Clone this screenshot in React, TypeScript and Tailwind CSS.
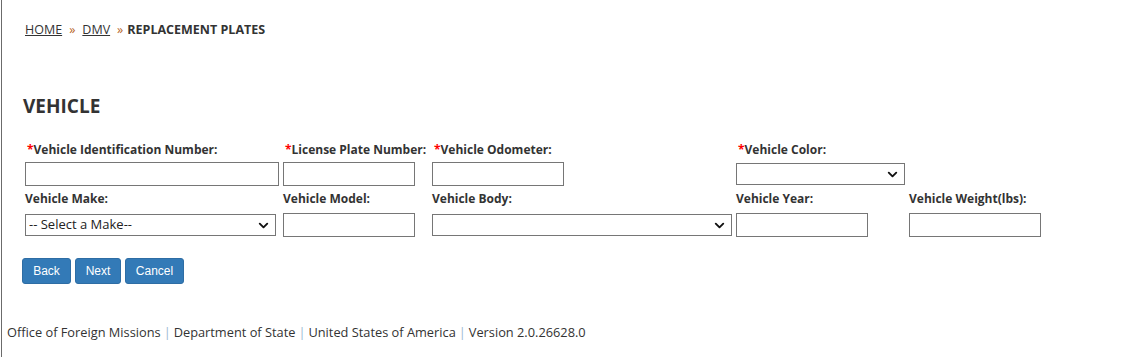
import { ChevronDown } from "lucide-react"

function Req() {
  return <span className="text-[#ff0000]">*</span>
}

function Field({ className = "" }: { className?: string }) {
  return <input type="text" className={`h-[24px] border border-[#767676] bg-white ${className}`} />
}

function Select({ className = "", text = "" }: { className?: string; text?: string }) {
  return (
    <div className={`relative flex h-[22px] items-center border border-[#767676] bg-white ${className}`}>
      <span className="pl-[3px] text-[13px] text-[#222]">{text}</span>
      <ChevronDown className="absolute right-[4px] top-[3px] h-[15px] w-[15px] text-[#111]" strokeWidth={3} />
    </div>
  )
}

function Label({ children, row1 = false }: { children: React.ReactNode; row1?: boolean }) {
  return (
    <div className={`flex items-center text-[12px] font-bold text-[#333] ${row1 ? "h-[20px] pl-[2px]" : "h-[26px]"}`}>
      {children}
    </div>
  )
}

export default function App() {
  return (
    <div
      className="ml-[1px] min-h-[357px] border-l border-[#6b6b6b] bg-white pt-[22px]"
      style={{ fontFamily: '"Open Sans", "DejaVu Sans", sans-serif' }}
    >
      <div className="pl-[23px]">
        <nav className="flex h-[16px] items-center text-[12.5px] text-[#333]">
          <a href="#" className="underline">HOME</a>
          <span className="mx-[7px] text-[#b7651f]">»</span>
          <a href="#" className="underline">DMV</a>
          <span className="ml-[7px] mr-[4px] text-[#b7651f]">»</span>
          <span className="font-bold">REPLACEMENT PLATES</span>
        </nav>

        <h2 className="mt-[58px] ml-[-2px] h-[20px] text-[19px] font-bold leading-[20px] text-[#333]">VEHICLE</h2>

        <div className="mt-[24px] grid grid-cols-[258px_149px_304px_173px_auto]">
          <Label row1><Req />Vehicle Identification Number:</Label>
          <Label row1><Req />License Plate Number:</Label>
          <Label row1><Req />Vehicle Odometer:</Label>
          <Label row1><Req />Vehicle Color:</Label>
          <div />

          <div className="pt-[2px]"><Field className="w-[254px]" /></div>
          <div className="pt-[2px]"><Field className="w-[132px]" /></div>
          <div className="pt-[2px]"><Field className="w-[132px]" /></div>
          <div className="pt-[2px]"><Select className="mt-[1px] w-[169px]" /></div>
          <div />

          <Label>Vehicle Make:</Label>
          <Label>Vehicle Model:</Label>
          <Label>Vehicle Body:</Label>
          <Label>Vehicle Year:</Label>
          <Label>Vehicle Weight(lbs):</Label>

          <div className="pt-[1px]"><Select className="mt-[1px] w-[251px]" text="-- Select a Make--" /></div>
          <div className="pt-[1px]"><Field className="h-[23px] w-[132px]" /></div>
          <div className="pt-[1px]"><Select className="mt-[1px] w-[300px]" /></div>
          <div className="pt-[1px]"><Field className="h-[23px] w-[132px]" /></div>
          <div className="pt-[1px]"><Field className="h-[23px] w-[132px]" /></div>
        </div>

        <div
          className="ml-[-3px] mt-[21px] flex gap-[4px] text-[12px] text-white"
          style={{ fontFamily: '"Liberation Sans", Arial, sans-serif' }}
        >
          <button className="h-[26px] w-[49px] rounded-[3px] border border-[#2e6da4] bg-[#337ab7]">Back</button>
          <button className="h-[26px] w-[46px] rounded-[3px] border border-[#2e6da4] bg-[#337ab7]">Next</button>
          <button className="h-[26px] w-[59px] rounded-[3px] border border-[#2e6da4] bg-[#337ab7]">Cancel</button>
        </div>
      </div>

      <footer className="mt-[41px] flex h-[16px] items-center pl-[5px] text-[12.8px] text-[#333]">
        <span>Office of Foreign Missions</span>
        <span className="mx-[3px] text-[#9ab8d2]">|</span>
        <span>Department of State</span>
        <span className="mx-[3px] text-[#9ab8d2]">|</span>
        <span>United States of America</span>
        <span className="mx-[3px] text-[#9ab8d2]">|</span>
        <span>Version 2.0.26628.0</span>
      </footer>
    </div>
  )
}
